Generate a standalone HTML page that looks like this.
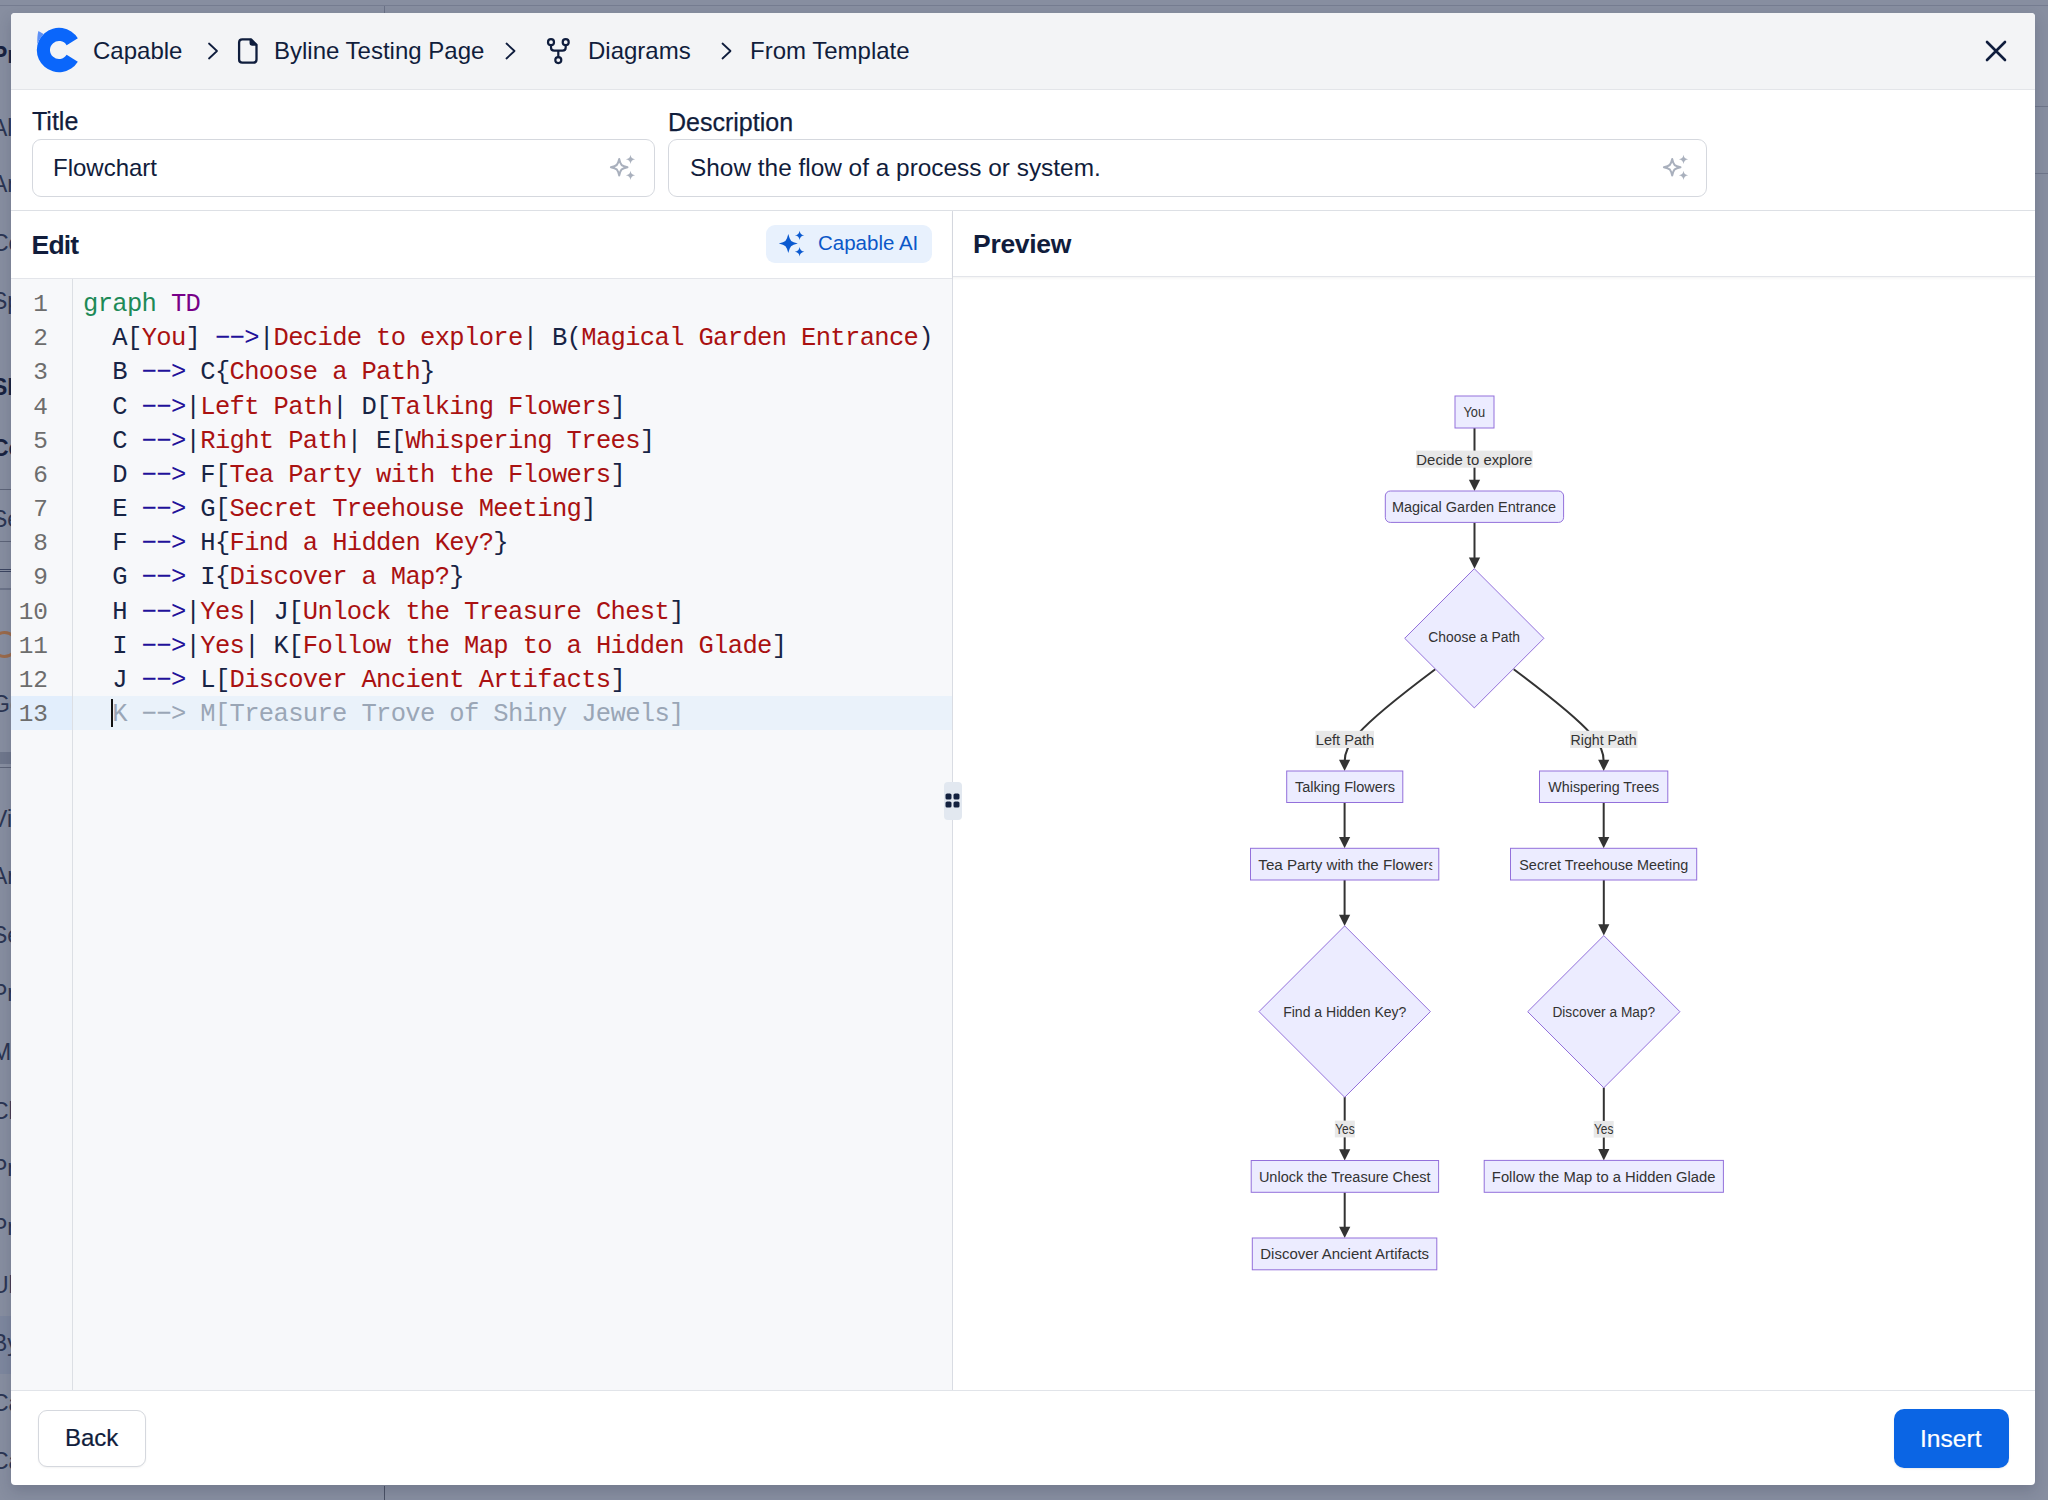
<!DOCTYPE html>
<html><head><meta charset="utf-8">
<style>
*{margin:0;padding:0;box-sizing:border-box}
html,body{width:2048px;height:1500px;overflow:hidden}
body{background:#878ea0;font-family:"Liberation Sans",sans-serif;color:#111d3c;position:relative}
.abs{position:absolute}
.t{position:absolute;white-space:pre;line-height:1}
#modal{position:absolute;left:11px;top:13px;width:2024px;height:1472px;background:#fff;border-radius:4px;overflow:hidden;box-shadow:0 6px 14px rgba(30,35,60,.18)}
#hdr{position:absolute;left:0;top:0;width:2024px;height:77px;background:#f3f4f6;border-bottom:1px solid #e3e5e9}
.lbl{font-size:24px}
.lab{font-size:25px;-webkit-text-stroke:0.25px #111d3c}
.inp{position:absolute;border:1.5px solid #d5d8de;border-radius:9px;background:#fff}
.code{position:absolute;left:0;font-family:"Liberation Mono",monospace;font-size:25.5px;letter-spacing:-0.65px;white-space:pre;line-height:34.17px;height:34.17px}
.ln{position:absolute;font-family:"Liberation Mono",monospace;font-size:24.42px;line-height:34.17px;color:#6d6d6d;text-align:right;width:37px;left:0}
.k{color:#1d8a57}.kw{color:#770088}.op{color:#221199}.s{color:#aa1111}.d{color:#172445}
.ghost,.ghost span{color:#9aa6b6}
.bg{color:#1b2540;font-size:24px;font-weight:700}
</style></head>
<body>
<!-- background page bits -->
<div class="abs" style="left:0;top:5px;width:2048px;height:1px;background:#757c90"></div>
<div class="abs" style="left:384px;top:6px;width:1px;height:7px;background:#6a7186"></div>
<div class="abs" style="left:384px;top:1486px;width:1px;height:14px;background:#4a5165"></div>
<div class="abs" style="left:2035px;top:106px;width:13px;height:1px;background:#6f768a"></div>
<div class="abs" style="left:2035px;top:173px;width:13px;height:1px;background:#6f768a"></div>
<div id="bgstrip">
<div class="abs" style="left:0;top:1316px;width:11px;height:58px;background:#7d879e"></div>
<div class="abs" style="left:0;top:489px;width:11px;height:1px;background:#5d6478"></div>
<div class="abs" style="left:0;top:541px;width:11px;height:1px;background:#5d6478"></div>
<div class="abs" style="left:0;top:588px;width:11px;height:2px;background:#6b7388"></div>
<div class="abs" style="left:0;top:767px;width:11px;height:1px;background:#5d6478"></div>
<div class="t" style="left:-8px;top:43.6px;font-size:23px;font-weight:700;color:#18223f">Pr</div>
<div class="t" style="left:-8px;top:116.9px;font-size:23px;font-weight:400;color:#2b3552">Al</div>
<div class="t" style="left:-8px;top:172.9px;font-size:23px;font-weight:400;color:#2b3552">Ar</div>
<div class="t" style="left:-8px;top:231.6px;font-size:23px;font-weight:400;color:#2b3552">Co</div>
<div class="t" style="left:-8px;top:289.9px;font-size:23px;font-weight:400;color:#2b3552">Sp</div>
<div class="t" style="left:-8px;top:375.9px;font-size:23px;font-weight:700;color:#18223f">SH</div>
<div class="t" style="left:-8px;top:436.9px;font-size:23px;font-weight:700;color:#18223f">Co</div>
<div class="t" style="left:-8px;top:507.6px;font-size:23px;font-weight:400;color:#2b3552">Se</div>
<div class="t" style="left:-8px;top:692.9px;font-size:23px;font-weight:400;color:#2b3552">Go</div>
<div class="t" style="left:-8px;top:807.6px;font-size:23px;font-weight:400;color:#2b3552">Vi</div>
<div class="t" style="left:-8px;top:864.9px;font-size:23px;font-weight:400;color:#2b3552">Ar</div>
<div class="t" style="left:-8px;top:923.6px;font-size:23px;font-weight:400;color:#2b3552">Se</div>
<div class="t" style="left:-8px;top:981.9px;font-size:23px;font-weight:400;color:#2b3552">Pr</div>
<div class="t" style="left:-8px;top:1040.9px;font-size:23px;font-weight:400;color:#2b3552">M</div>
<div class="t" style="left:-8px;top:1099.6px;font-size:23px;font-weight:400;color:#2b3552">Cl</div>
<div class="t" style="left:-8px;top:1157.4px;font-size:23px;font-weight:400;color:#2b3552">Pr</div>
<div class="t" style="left:-8px;top:1215.6px;font-size:23px;font-weight:400;color:#2b3552">Pr</div>
<div class="t" style="left:-8px;top:1273.9px;font-size:23px;font-weight:400;color:#2b3552">Ul</div>
<div class="t" style="left:-8px;top:1331.9px;font-size:23px;font-weight:400;color:#2b3552">By</div>
<div class="t" style="left:-8px;top:1391.6px;font-size:23px;font-weight:400;color:#2b3552">Ca</div>
<div class="t" style="left:-8px;top:1449.9px;font-size:23px;font-weight:400;color:#2b3552">Ca</div>
<div class="abs" style="left:0;top:569px;width:11px;height:3px;border-top:1px solid #3b4460;border-bottom:1px solid #3b4460"></div>
<div class="abs" style="left:-9px;top:630.7px;width:27px;height:27px;border:3px solid #9b6a4a;border-radius:50%"></div>
<div class="abs" style="left:0;top:752px;width:11px;height:12px;background:#6f778c"></div>
</div>

<div id="modal">
  <div id="hdr">
    <!-- logo -->
    <svg class="abs" style="left:-11px;top:-13px" width="100" height="100" viewBox="0 0 100 100">
      <path d="M77.83,38.24 A22.2,22.2 0 1 0 77.83,61.76 L66.63,54.77 A9,9 0 1 1 66.63,45.23 Z" fill="#0a66fb"/>
      <path d="M38.4,31 L43.6,34.1 Q39.5,38.5 37.3,44.3 Q37,36 38.4,31 Z" fill="#5d91f7"/>
    </svg>
    <div class="t lbl" style="left:82px;top:26px">Capable</div>
    <svg class="abs" style="left:-11px;top:-13px" width="1000" height="100" viewBox="0 0 1000 100" fill="none" stroke="#0f1d3d" stroke-linecap="round" stroke-linejoin="round">
      <path d="M209,43.5 L217,51 L209,58.5" stroke-width="1.8"/>
      <path d="M506.5,43.5 L514.5,51 L506.5,58.5" stroke-width="1.8"/>
      <path d="M722.5,43.5 L730.5,51 L722.5,58.5" stroke-width="1.8"/>
      <path d="M243,39.3 H251 L256.5,44.8 V59.5 Q256.5,62.7 253.3,62.7 H242.3 Q239.1,62.7 239.1,59.5 V42.5 Q239.1,39.3 242.3,39.3 Z" stroke-width="2.3"/>
      <path d="M250.3,39.5 V43 Q250.3,45 252.3,45 H256.3 Z" fill="#0f1d3d" stroke-width="1.5"/>
      <circle cx="551" cy="42.2" r="3" stroke-width="2.2"/>
      <circle cx="565.7" cy="42.2" r="3" stroke-width="2.2"/>
      <circle cx="558.3" cy="60.1" r="3" stroke-width="2.2"/>
      <path d="M551,45.2 V47.5 Q551,50.7 554.2,50.7 H562.5 Q565.7,50.7 565.7,47.5 V45.2 M558.3,50.7 V57.1" stroke-width="2.2"/>
    </svg>
    <svg class="abs" style="left:1965px;top:20px" width="50" height="50" viewBox="1976 33 50 50" fill="none" stroke="#0f1d3d" stroke-linecap="round"><path d="M1987,42 L2005,60 M2005,42 L1987,60" stroke-width="2.6"/></svg>
    <div class="t lbl" style="left:263px;top:26px">Byline Testing Page</div>
    <div class="t lbl" style="left:577px;top:26px">Diagrams</div>
    <div class="t lbl" style="left:739px;top:26px">From Template</div>
  </div>

  <!-- fields -->
  <div class="t lab" style="left:21px;top:96px">Title</div>
  <div class="inp" style="left:20.5px;top:125.5px;width:623px;height:58px"></div>
  <div class="t lbl" style="left:42px;top:142.6px">Flowchart</div>
  <div class="t lab" style="left:657px;top:96.8px">Description</div>
  <div class="inp" style="left:657px;top:125.5px;width:1039px;height:58px"></div>
  <div class="t lbl" style="left:679px;top:143.2px;font-size:24.4px">Show the flow of a process or system.</div>
  <div class="abs" style="left:0;top:197px;width:2024px;height:1px;background:#dfe2e7"></div>

  <!-- edit panel -->
  <div class="abs" style="left:0;top:198px;width:941px;height:68px;background:#fff;border-bottom:1px solid #e3e5ea;box-shadow:0 1px 3px rgba(0,0,0,.06)"></div>
  <div class="t" style="left:20.5px;top:218.5px;font-size:26.5px;letter-spacing:-0.8px;font-weight:700">Edit</div>
  <div class="abs" style="left:755px;top:211.5px;width:166px;height:38.5px;background:#e8f1fd;border-radius:9px"></div>
  <div class="t" style="left:807px;top:220px;font-size:20.5px;color:#0b57c8">Capable AI</div>
  <div class="abs" style="left:0;top:266px;width:941px;height:1111px;background:#f7f8fa"></div>
  <div class="abs" style="left:61px;top:266px;width:1px;height:1111px;background:#dcdfe4"></div>
  <div id="codearea">
  <div class="abs" style="left:0;top:683.04px;width:61px;height:34.17px;background:#e2eefc"></div><div class="abs" style="left:62px;top:683.04px;width:879px;height:34.17px;background:#eaf2fa"></div>
  <div class="ln" style="top:275.00px">1</div>
  <div class="code" style="left:72px;top:275.00px"><span class="k">graph</span><span class="d"> </span><span class="kw">TD</span></div>
  <div class="ln" style="top:309.17px">2</div>
  <div class="code" style="left:72px;top:309.17px"><span class="d">  A[</span><span class="s">You</span><span class="d">]</span><span class="op"> &#8722;&#8722;&gt;</span><span class="d">|</span><span class="s">Decide to explore</span><span class="d">| B(</span><span class="s">Magical Garden Entrance</span><span class="d">)</span></div>
  <div class="ln" style="top:343.34px">3</div>
  <div class="code" style="left:72px;top:343.34px"><span class="d">  B</span><span class="op"> &#8722;&#8722;&gt;</span><span class="d"> C{</span><span class="s">Choose a Path</span><span class="d">}</span></div>
  <div class="ln" style="top:377.51px">4</div>
  <div class="code" style="left:72px;top:377.51px"><span class="d">  C</span><span class="op"> &#8722;&#8722;&gt;</span><span class="d">|</span><span class="s">Left Path</span><span class="d">| D[</span><span class="s">Talking Flowers</span><span class="d">]</span></div>
  <div class="ln" style="top:411.68px">5</div>
  <div class="code" style="left:72px;top:411.68px"><span class="d">  C</span><span class="op"> &#8722;&#8722;&gt;</span><span class="d">|</span><span class="s">Right Path</span><span class="d">| E[</span><span class="s">Whispering Trees</span><span class="d">]</span></div>
  <div class="ln" style="top:445.85px">6</div>
  <div class="code" style="left:72px;top:445.85px"><span class="d">  D</span><span class="op"> &#8722;&#8722;&gt;</span><span class="d"> F[</span><span class="s">Tea Party with the Flowers</span><span class="d">]</span></div>
  <div class="ln" style="top:480.02px">7</div>
  <div class="code" style="left:72px;top:480.02px"><span class="d">  E</span><span class="op"> &#8722;&#8722;&gt;</span><span class="d"> G[</span><span class="s">Secret Treehouse Meeting</span><span class="d">]</span></div>
  <div class="ln" style="top:514.19px">8</div>
  <div class="code" style="left:72px;top:514.19px"><span class="d">  F</span><span class="op"> &#8722;&#8722;&gt;</span><span class="d"> H{</span><span class="s">Find a Hidden Key?</span><span class="d">}</span></div>
  <div class="ln" style="top:548.36px">9</div>
  <div class="code" style="left:72px;top:548.36px"><span class="d">  G</span><span class="op"> &#8722;&#8722;&gt;</span><span class="d"> I{</span><span class="s">Discover a Map?</span><span class="d">}</span></div>
  <div class="ln" style="top:582.53px">10</div>
  <div class="code" style="left:72px;top:582.53px"><span class="d">  H</span><span class="op"> &#8722;&#8722;&gt;</span><span class="d">|</span><span class="s">Yes</span><span class="d">| J[</span><span class="s">Unlock the Treasure Chest</span><span class="d">]</span></div>
  <div class="ln" style="top:616.70px">11</div>
  <div class="code" style="left:72px;top:616.70px"><span class="d">  I</span><span class="op"> &#8722;&#8722;&gt;</span><span class="d">|</span><span class="s">Yes</span><span class="d">| K[</span><span class="s">Follow the Map to a Hidden Glade</span><span class="d">]</span></div>
  <div class="ln" style="top:650.87px">12</div>
  <div class="code" style="left:72px;top:650.87px"><span class="d">  J</span><span class="op"> &#8722;&#8722;&gt;</span><span class="d"> L[</span><span class="s">Discover Ancient Artifacts</span><span class="d">]</span></div>
  <div class="ln" style="top:685.04px">13</div>
  <div class="code ghost" style="left:72px;top:685.04px">  K &#8722;&#8722;&gt; M[Treasure Trove of Shiny Jewels]</div>
  <div class="abs" style="left:100.3px;top:685.8px;width:1.8px;height:28px;background:#111"></div>
  </div>

  <!-- divider -->
  <div class="abs" style="left:941px;top:198px;width:1px;height:1179px;background:#d9dce3"></div>
  <div class="abs" style="left:932.5px;top:768.5px;width:18.5px;height:38.5px;background:#e2e8f0;border-radius:4px"></div>

  <!-- preview panel -->
  <div class="abs" style="left:942px;top:198px;width:1082px;height:66px;background:#fff;border-bottom:1px solid #e3e5ea;box-shadow:0 1px 3px rgba(0,0,0,.06)"></div>
  <div class="t" style="left:962px;top:217.8px;font-size:26.5px;letter-spacing:-0.3px;font-weight:700">Preview</div>

  <!-- footer -->
  <div class="abs" style="left:0;top:1377px;width:2024px;height:1px;background:#e1e4e9"></div>
  <div class="abs" style="left:27px;top:1396.5px;width:107.5px;height:57px;border:1.5px solid #d5d8de;border-radius:9px;background:#fff;box-shadow:0 1px 2px rgba(0,0,0,.05)"></div>
  <div class="t lbl" style="left:54px;top:1413px;-webkit-text-stroke:0.2px #111d3c">Back</div>
  <div class="abs" style="left:1882.5px;top:1396px;width:115.5px;height:58.5px;background:#0b65e4;border-radius:10px;box-shadow:0 1px 2px rgba(0,0,0,.08)"></div>
  <div class="t" style="left:1909px;top:1414px;color:#fff;font-size:24.6px;-webkit-text-stroke:0.2px #fff">Insert</div>
</div>
<div id="icons"><svg class="abs" style="left:0;top:0" width="2048" height="1500" viewBox="0 0 2048 1500"><path d="M619.20,158.90 L620.20,162.40 A5.54,5.54 0 0 0 624.00,166.20 L627.50,167.20 L624.00,168.20 A5.54,5.54 0 0 0 620.20,172.00 L619.20,175.50 L618.20,172.00 A5.54,5.54 0 0 0 614.40,168.20 L610.90,167.20 L614.40,166.20 A5.54,5.54 0 0 0 618.20,162.40 Z" fill="none" stroke="#a9b0bd" stroke-width="2" stroke-linejoin="round"/><path d="M630.50,154.70 L630.96,156.45 A3.68,3.68 0 0 0 633.35,158.84 L635.10,159.30 L633.35,159.76 A3.68,3.68 0 0 0 630.96,162.15 L630.50,163.90 L630.04,162.15 A3.68,3.68 0 0 0 627.65,159.76 L625.90,159.30 L627.65,158.84 A3.68,3.68 0 0 0 630.04,156.45 Z" fill="#a9b0bd"/><path d="M630.50,170.70 L630.96,172.45 A3.68,3.68 0 0 0 633.35,174.84 L635.10,175.30 L633.35,175.76 A3.68,3.68 0 0 0 630.96,178.15 L630.50,179.90 L630.04,178.15 A3.68,3.68 0 0 0 627.65,175.76 L625.90,175.30 L627.65,174.84 A3.68,3.68 0 0 0 630.04,172.45 Z" fill="#a9b0bd"/><path d="M1672.20,158.90 L1673.20,162.40 A5.54,5.54 0 0 0 1677.00,166.20 L1680.50,167.20 L1677.00,168.20 A5.54,5.54 0 0 0 1673.20,172.00 L1672.20,175.50 L1671.20,172.00 A5.54,5.54 0 0 0 1667.40,168.20 L1663.90,167.20 L1667.40,166.20 A5.54,5.54 0 0 0 1671.20,162.40 Z" fill="none" stroke="#a9b0bd" stroke-width="2" stroke-linejoin="round"/><path d="M1683.50,154.70 L1683.96,156.45 A3.68,3.68 0 0 0 1686.35,158.84 L1688.10,159.30 L1686.35,159.76 A3.68,3.68 0 0 0 1683.96,162.15 L1683.50,163.90 L1683.04,162.15 A3.68,3.68 0 0 0 1680.65,159.76 L1678.90,159.30 L1680.65,158.84 A3.68,3.68 0 0 0 1683.04,156.45 Z" fill="#a9b0bd"/><path d="M1683.50,170.70 L1683.96,172.45 A3.68,3.68 0 0 0 1686.35,174.84 L1688.10,175.30 L1686.35,175.76 A3.68,3.68 0 0 0 1683.96,178.15 L1683.50,179.90 L1683.04,178.15 A3.68,3.68 0 0 0 1680.65,175.76 L1678.90,175.30 L1680.65,174.84 A3.68,3.68 0 0 0 1683.04,172.45 Z" fill="#a9b0bd"/><path d="M788.30,234.00 L789.63,238.18 A5.89,5.89 0 0 0 793.62,242.17 L797.80,243.50 L793.62,244.83 A5.89,5.89 0 0 0 789.63,248.82 L788.30,253.00 L786.97,248.82 A5.89,5.89 0 0 0 782.98,244.83 L778.80,243.50 L782.98,242.17 A5.89,5.89 0 0 0 786.97,238.18 Z" fill="#0b5ad0"/><path d="M799.60,230.70 L800.07,232.49 A3.76,3.76 0 0 0 802.51,234.93 L804.30,235.40 L802.51,235.87 A3.76,3.76 0 0 0 800.07,238.31 L799.60,240.10 L799.13,238.31 A3.76,3.76 0 0 0 796.69,235.87 L794.90,235.40 L796.69,234.93 A3.76,3.76 0 0 0 799.13,232.49 Z" fill="#0b5ad0"/><path d="M799.60,247.00 L800.07,248.79 A3.76,3.76 0 0 0 802.51,251.23 L804.30,251.70 L802.51,252.17 A3.76,3.76 0 0 0 800.07,254.61 L799.60,256.40 L799.13,254.61 A3.76,3.76 0 0 0 796.69,252.17 L794.90,251.70 L796.69,251.23 A3.76,3.76 0 0 0 799.13,248.79 Z" fill="#0b5ad0"/><rect x="945.5" y="793.5" width="6" height="6" rx="1.6" fill="#13213f"/><rect x="945.5" y="801.5" width="6" height="6" rx="1.6" fill="#13213f"/><rect x="953.5" y="793.5" width="6" height="6" rx="1.6" fill="#13213f"/><rect x="953.5" y="801.5" width="6" height="6" rx="1.6" fill="#13213f"/></svg></div>
<div id="chart"><svg class="abs" style="left:0;top:0" width="2048" height="1500" viewBox="0 0 2048 1500" font-family="Liberation Sans" fill="#333"><defs><clipPath id="tpc"><rect x="1250" y="845" width="182.3" height="40"/></clipPath></defs>
<path d="M1474.5,428 L1474.5,483" stroke="#333" stroke-width="2" fill="none"/><path d="M1468.9,479.7 L1480.1,479.7 L1474.5,491 Z" fill="#333"/>
<path d="M1474.5,522.4 L1474.5,560.7" stroke="#333" stroke-width="2" fill="none"/><path d="M1468.9,557.4000000000001 L1480.1,557.4000000000001 L1474.5,568.7 Z" fill="#333"/>
<path d="M1435.3,669.3 C1405,692 1372,718 1358,734 C1348,746 1344.6,752 1344.6,762" stroke="#333" stroke-width="2" fill="none"/><path d="M1339.0,759.7 L1350.1999999999998,759.7 L1344.6,771 Z" fill="#333"/>
<path d="M1513.7,669.3 C1544,692 1577,718 1591,734 C1601,746 1603.7,752 1603.7,762" stroke="#333" stroke-width="2" fill="none"/><path d="M1598.1000000000001,759.7 L1609.3,759.7 L1603.7,771 Z" fill="#333"/>
<path d="M1344.6,802.5 L1344.6,840.3" stroke="#333" stroke-width="2" fill="none"/><path d="M1339.0,837.0 L1350.1999999999998,837.0 L1344.6,848.3 Z" fill="#333"/>
<path d="M1603.7,802.5 L1603.7,840.3" stroke="#333" stroke-width="2" fill="none"/><path d="M1598.1000000000001,837.0 L1609.3,837.0 L1603.7,848.3 Z" fill="#333"/>
<path d="M1344.6,880 L1344.6,918" stroke="#333" stroke-width="2" fill="none"/><path d="M1339.0,914.7 L1350.1999999999998,914.7 L1344.6,926 Z" fill="#333"/>
<path d="M1603.8,880 L1603.8,927.6" stroke="#333" stroke-width="2" fill="none"/><path d="M1598.2,924.3000000000001 L1609.3999999999999,924.3000000000001 L1603.8,935.6 Z" fill="#333"/>
<path d="M1344.7,1097 L1344.7,1152.5" stroke="#333" stroke-width="2" fill="none"/><path d="M1339.1000000000001,1149.2 L1350.3,1149.2 L1344.7,1160.5 Z" fill="#333"/>
<path d="M1603.8,1087.5 L1603.8,1152.4" stroke="#333" stroke-width="2" fill="none"/><path d="M1598.2,1149.1000000000001 L1609.3999999999999,1149.1000000000001 L1603.8,1160.4 Z" fill="#333"/>
<path d="M1344.7,1192.3 L1344.7,1230" stroke="#333" stroke-width="2" fill="none"/><path d="M1339.1000000000001,1226.7 L1350.3,1226.7 L1344.7,1238 Z" fill="#333"/>
<rect x="1455" y="396" width="39.0" height="32.0" rx="0" fill="#ececff" stroke="#9370db" stroke-width="1"/>
<rect x="1385.3" y="491" width="178.3" height="31.4" rx="5" fill="#ececff" stroke="#9370db" stroke-width="1"/>
<path d="M1474.3,568.6999999999999 L1543.8999999999999,638.3 L1474.3,707.9 L1404.7,638.3 Z" fill="#ececff" stroke="#9370db" stroke-width="1"/>
<rect x="1286.7" y="771" width="116.1" height="31.5" rx="0" fill="#ececff" stroke="#9370db" stroke-width="1"/>
<rect x="1539.5" y="771" width="128.3" height="31.5" rx="0" fill="#ececff" stroke="#9370db" stroke-width="1"/>
<rect x="1250.5" y="848.3" width="188.3" height="31.7" rx="0" fill="#ececff" stroke="#9370db" stroke-width="1"/>
<rect x="1510.5" y="848.3" width="186.2" height="31.7" rx="0" fill="#ececff" stroke="#9370db" stroke-width="1"/>
<path d="M1344.7,925.9 L1430.4,1011.6 L1344.7,1097.3 L1259.0,1011.6 Z" fill="#ececff" stroke="#9370db" stroke-width="1"/>
<path d="M1603.8,935.6 L1679.8999999999999,1011.7 L1603.8,1087.8 L1527.7,1011.7 Z" fill="#ececff" stroke="#9370db" stroke-width="1"/>
<rect x="1251.2" y="1160.5" width="187.4" height="31.8" rx="0" fill="#ececff" stroke="#9370db" stroke-width="1"/>
<rect x="1484.2" y="1160.4" width="239.2" height="31.9" rx="0" fill="#ececff" stroke="#9370db" stroke-width="1"/>
<rect x="1252.3" y="1238" width="184.5" height="31.8" rx="0" fill="#ececff" stroke="#9370db" stroke-width="1"/>
<rect x="1416" y="450.6" width="116.6" height="17.1" fill="#e8e8e8"/>
<rect x="1315.5" y="730.8" width="58.5" height="17.2" fill="#e8e8e8"/>
<rect x="1570" y="730.8" width="67.5" height="17.2" fill="#e8e8e8"/>
<rect x="1334.8" y="1120.6" width="20.0" height="16.8" fill="#e8e8e8"/>
<rect x="1593.7" y="1120.9" width="20.0" height="16.7" fill="#e8e8e8"/>
<text x="1474.3" y="417.2" text-anchor="middle" textLength="21.7" lengthAdjust="spacingAndGlyphs" font-size="14.7">You</text>
<text x="1474.3" y="465.4" text-anchor="middle" textLength="115.9" lengthAdjust="spacingAndGlyphs" font-size="14.7">Decide to explore</text>
<text x="1474.0" y="511.8" text-anchor="middle" textLength="164.1" lengthAdjust="spacingAndGlyphs" font-size="14.7">Magical Garden Entrance</text>
<text x="1474.2" y="642.3" text-anchor="middle" textLength="91.7" lengthAdjust="spacingAndGlyphs" font-size="14.7">Choose a Path</text>
<text x="1345.0" y="744.6" text-anchor="middle" textLength="58.4" lengthAdjust="spacingAndGlyphs" font-size="14.7">Left Path</text>
<text x="1603.6" y="744.6" text-anchor="middle" textLength="66.2" lengthAdjust="spacingAndGlyphs" font-size="14.7">Right Path</text>
<text x="1345.0" y="792.0" text-anchor="middle" textLength="100.0" lengthAdjust="spacingAndGlyphs" font-size="14.7">Talking Flowers</text>
<text x="1603.8" y="792.0" text-anchor="middle" textLength="110.9" lengthAdjust="spacingAndGlyphs" font-size="14.7">Whispering Trees</text>
<text clip-path="url(#tpc)" x="1347.2" y="869.5" text-anchor="middle" textLength="177.7" lengthAdjust="spacingAndGlyphs" font-size="14.7">Tea Party with the Flowers</text>
<text x="1603.8" y="869.5" text-anchor="middle" textLength="169.1" lengthAdjust="spacingAndGlyphs" font-size="14.7">Secret Treehouse Meeting</text>
<text x="1344.8" y="1016.9" text-anchor="middle" textLength="123.3" lengthAdjust="spacingAndGlyphs" font-size="14.7">Find a Hidden Key?</text>
<text x="1603.8" y="1017.0" text-anchor="middle" textLength="102.7" lengthAdjust="spacingAndGlyphs" font-size="14.7">Discover a Map?</text>
<text x="1344.9" y="1134.2" text-anchor="middle" textLength="19.4" lengthAdjust="spacingAndGlyphs" font-size="14.7">Yes</text>
<text x="1603.7" y="1133.8" text-anchor="middle" textLength="19.4" lengthAdjust="spacingAndGlyphs" font-size="14.7">Yes</text>
<text x="1344.7" y="1181.7" text-anchor="middle" textLength="171.6" lengthAdjust="spacingAndGlyphs" font-size="14.7">Unlock the Treasure Chest</text>
<text x="1603.7" y="1181.5" text-anchor="middle" textLength="223.7" lengthAdjust="spacingAndGlyphs" font-size="14.7">Follow the Map to a Hidden Glade</text>
<text x="1344.7" y="1259.2" text-anchor="middle" textLength="168.8" lengthAdjust="spacingAndGlyphs" font-size="14.7">Discover Ancient Artifacts</text>
</svg></div>
</body></html>
